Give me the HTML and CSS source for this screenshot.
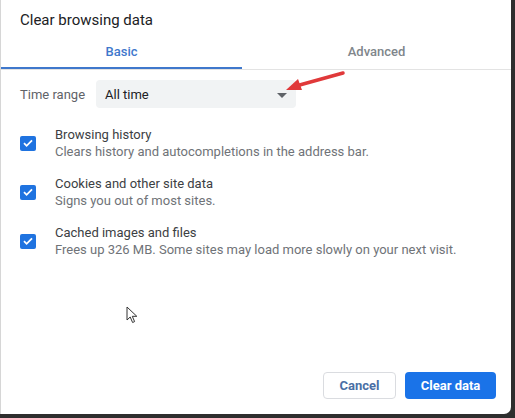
FILE: index.html
```html
<!DOCTYPE html>
<html lang="en">

<head>
    <meta charset="UTF-8">
    <meta name="viewport" content="width=device-width, initial-scale=1.0">
    <title>Clear browsing data</title>
    <link rel="stylesheet" href="styles.css">
</head>

<body>
    <div class="dialog">
        <h1 class="title">Clear browsing data</h1>

        <div class="tabs">
            <div class="tab active">Basic</div>
            <div class="tab">Advanced</div>
        </div>

        <div class="range-row">
            <span class="range-label">Time range</span>
            <div class="select">
                <span>All time</span>
                <span class="caret"></span>
            </div>
        </div>

        <div class="options">
            <div class="option">
                <span class="checkbox">
                    <svg width="12" height="12" viewBox="0 0 12 12"><path d="M2 6.2l2.6 2.6L10 3.4" fill="none" stroke="#fff" stroke-width="1.8"/></svg>
                </span>
                <div>
                    <div class="option-title">Browsing history</div>
                    <div class="option-desc">Clears history and autocompletions in the address bar.</div>
                </div>
            </div>
            <div class="option">
                <span class="checkbox">
                    <svg width="12" height="12" viewBox="0 0 12 12"><path d="M2 6.2l2.6 2.6L10 3.4" fill="none" stroke="#fff" stroke-width="1.8"/></svg>
                </span>
                <div>
                    <div class="option-title">Cookies and other site data</div>
                    <div class="option-desc">Signs you out of most sites.</div>
                </div>
            </div>
            <div class="option">
                <span class="checkbox">
                    <svg width="12" height="12" viewBox="0 0 12 12"><path d="M2 6.2l2.6 2.6L10 3.4" fill="none" stroke="#fff" stroke-width="1.8"/></svg>
                </span>
                <div>
                    <div class="option-title">Cached images and files</div>
                    <div class="option-desc">Frees up 326 MB. Some sites may load more slowly on your next visit.</div>
                </div>
            </div>
        </div>

        <div class="actions">
            <button class="btn btn-cancel">Cancel</button>
            <button class="btn btn-primary">Clear data</button>
        </div>

        <!-- annotation arrow drawn over the screenshot -->
        <svg class="pointer-arrow" width="70" height="30" viewBox="0 0 70 30">
            <path d="M60 4 L13 17" stroke="#e0393a" stroke-width="3.5" stroke-linecap="round" fill="none"/>
            <path d="M3 21 L15 10 L19 21 Z" fill="#e0393a"/>
        </svg>

        <svg class="cursor" width="14" height="18" viewBox="0 0 14 18">
            <path d="M1 1 L1 14 L4.2 11 L6.6 16.5 L8.6 15.6 L6.3 10.3 L10.8 10.3 Z" fill="#fff" stroke="#333" stroke-width="1" stroke-linejoin="round"/>
        </svg>
    </div>
</body>

</html>
```

FILE: styles.css
```css
body {
    background-color: #2e2e2e;
    font-family: Roboto, "Liberation Sans", sans-serif;
    margin: 0;
    padding: 0;
}

.dialog {
    position: relative;
    width: 510px;
    height: 414px;
    background-color: #fff;
    border-left: 1px solid #d6d6d6;
    border-bottom-right-radius: 7px;
    display: flex;
    flex-direction: column;
}

.title {
    margin: 0;
    padding: 10px 19px 0;
    font-size: 15px;
    font-weight: 400;
    line-height: 21px;
    color: #202124;
}

.tabs {
    display: flex;
    margin-top: 3px;
    border-bottom: 1px solid #e3e3e3;
}

.tab {
    flex: 1;
    text-align: center;
    font-size: 13px;
    font-weight: 500;
    color: #80868b;
    height: 33px;
    line-height: 36px;
    border-bottom: 2px solid transparent;
}

.tab.active {
    flex: 0 0 241px;
    color: #3f78cc;
    border-bottom-color: #3f78cc;
}

.range-row {
    display: flex;
    align-items: center;
    margin-top: 10px;
    padding-left: 19px;
}

.range-label {
    width: 76px;
    font-size: 13px;
    color: #5f6368;
}

.select {
    width: 200px;
    height: 28px;
    box-sizing: border-box;
    background-color: #f1f3f4;
    border-radius: 4px;
    display: flex;
    align-items: center;
    justify-content: space-between;
    padding: 0 9px 0 9px;
    font-size: 13px;
    color: #202124;
}

.caret {
    width: 0;
    height: 0;
    border-left: 5px solid transparent;
    border-right: 5px solid transparent;
    border-top: 5px solid #5f6368;
    margin-top: 2px;
}

.options {
    display: flex;
    flex-direction: column;
    gap: 15px;
    margin-top: 18px;
    padding-left: 19px;
}

.option {
    display: flex;
    align-items: center;
}

.checkbox {
    width: 16px;
    height: 15px;
    border-radius: 2px;
    background-color: #1f73e0;
    display: flex;
    align-items: center;
    justify-content: center;
    margin-right: 19px;
}

.option-title {
    font-size: 13px;
    line-height: 17px;
    color: #3c4043;
}

.option-desc {
    font-size: 13px;
    line-height: 17px;
    color: #6f7378;
}

.actions {
    margin-top: auto;
    display: flex;
    justify-content: flex-end;
    gap: 9px;
    padding: 0 15px 15px 0;
}

.btn {
    height: 27px;
    border-radius: 4px;
    font-family: Roboto, "Liberation Sans", sans-serif;
    font-size: 13px;
    font-weight: 700;
    cursor: pointer;
}

.btn-cancel {
    width: 73px;
    background-color: #fff;
    border: 1px solid #dadce0;
    color: #4a6fa5;
}

.btn-primary {
    width: 91px;
    background-color: #1a73e8;
    border: none;
    color: #fff;
}

.pointer-arrow {
    position: absolute;
    left: 282px;
    top: 69px;
}

.cursor {
    position: absolute;
    left: 125px;
    top: 306px;
}
```
